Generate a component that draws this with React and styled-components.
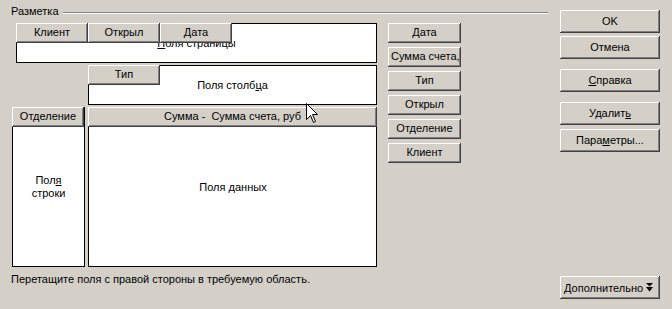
import styled, { createGlobalStyle } from 'styled-components'

const GlobalStyle = createGlobalStyle`
    html, body {
        margin: 0;
        padding: 0;
        background: #d4d0c8;
    }
`

const pageFields = ['Клиент', 'Открыл', 'Дата']
const sourceFields = ['Дата', 'Сумма счета, руб', 'Тип', 'Открыл', 'Отделение', 'Клиент']

const App = () => {
    return (
        <>
            <GlobalStyle />
            <Dialog>
                <Group>
                    <GroupHeading>
                        <GroupTitle>Разметка</GroupTitle>
                        <EtchedLine />
                    </GroupHeading>

                    <GroupBody>
                        <LayoutArea>
                            <Zone $left={4} $width={361} $height={40}>
                                <ZoneLabel><u>П</u>оля страницы</ZoneLabel>
                                <ZoneButtons>
                                    {pageFields.map(name => (
                                        <FieldButton key={name} $width={72}>{name}</FieldButton>
                                    ))}
                                </ZoneButtons>
                            </Zone>

                            <Zone $left={76} $width={289} $height={40}>
                                <ZoneLabel>Поля столб<u>ц</u>а</ZoneLabel>
                                <ZoneButtons>
                                    <FieldButton $width={72}>Тип</FieldButton>
                                </ZoneButtons>
                            </Zone>

                            <BottomRow>
                                <Zone $width={73} $height={160}>
                                    <ZoneLabel>Пол<u>я</u><br />строки</ZoneLabel>
                                    <ZoneButtons>
                                        <FieldButton $width={72}>Отделение</FieldButton>
                                    </ZoneButtons>
                                </Zone>
                                <Zone $width={289} $height={160}>
                                    <ZoneLabel>Поля <u>д</u>анных</ZoneLabel>
                                    <ZoneButtons>
                                        <FieldButton $width={289} $pre>Сумма -  Сумма счета, руб</FieldButton>
                                    </ZoneButtons>
                                </Zone>
                            </BottomRow>
                        </LayoutArea>

                        <FieldList>
                            {sourceFields.map(name => (
                                <FieldButton key={name} $width={73}>{name}</FieldButton>
                            ))}
                        </FieldList>
                    </GroupBody>

                    <Hint>Перетащите поля с правой стороны в требуемую область.</Hint>
                </Group>

                <ButtonColumn>
                    <PushButton>OK</PushButton>
                    <PushButton $gap={3}>Отмена</PushButton>
                    <PushButton $gap={10}><u>С</u>правка</PushButton>
                    <PushButton $gap={10}>Удалит<u>ь</u></PushButton>
                    <PushButton $gap={4}>Пара<u>м</u>етры...</PushButton>
                    <Spacer />
                    <MoreButton>
                        Дополнительно
                        <svg width="7" height="9" viewBox="0 0 7 9">
                            <polygon points="0,0 7,0 3.5,3.5" fill="#000" />
                            <polygon points="0,4 7,4 3.5,8.5" fill="#000" />
                        </svg>
                    </MoreButton>
                </ButtonColumn>

                <Cursor width="13" height="21" viewBox="0 0 13 21">
                    <polygon
                        points="0.5,0.5 0.5,16.5 4.5,12.5 7.5,19.5 9.5,18.5 6.5,11.5 11.5,11.5"
                        fill="#fff"
                        stroke="#000"
                        strokeWidth="1"
                    />
                </Cursor>
            </Dialog>
        </>
    )
}

const Dialog = styled.div`
    position: relative;
    display: flex;
    width: 672px;
    height: 309px;
    box-sizing: border-box;
    padding: 5px 12px 10px 11px;
    background: #d4d0c8;
    color: #000;
    font-family: "Liberation Sans", Arial, sans-serif;
    font-size: 11px;
    line-height: 13px;
    overflow: hidden;
`

const Group = styled.div`
    display: flex;
    flex-direction: column;
    width: 537px;
`

const GroupHeading = styled.div`
    display: flex;
    align-items: center;
    height: 13px;
`

const GroupTitle = styled.span`
    white-space: nowrap;
`

const EtchedLine = styled.div`
    flex: 1;
    margin: 2px 0 0 4px;
    border-top: 1px solid #808080;
    border-bottom: 1px solid #fff;
`

const GroupBody = styled.div`
    display: flex;
    align-items: flex-start;
    margin: 5px 0 0 1px;
`

const LayoutArea = styled.div`
    display: flex;
    flex-direction: column;
    gap: 2px;
    width: 365px;
`

const BottomRow = styled.div`
    display: flex;
    gap: 3px;
`

const Zone = styled.div`
    display: grid;
    box-sizing: border-box;
    width: ${p => p.$width}px;
    height: ${p => p.$height}px;
    margin-left: ${p => p.$left || 0}px;
    background: #fff;
    border: 1px solid #000;
    & > * {
        grid-area: 1 / 1;
    }
`

const ZoneLabel = styled.div`
    align-self: center;
    justify-self: center;
    text-align: center;
    white-space: nowrap;
`

const ZoneButtons = styled.div`
    display: flex;
    align-self: start;
    margin: -1px 0 0 -1px;
`

const FieldButton = styled.div`
    box-sizing: border-box;
    width: ${p => p.$width}px;
    height: 20px;
    padding: 0 3px;
    background: #d4d0c8;
    box-shadow: inset -1px -1px #404040, inset 1px 1px #fff, inset -2px -2px #808080;
    line-height: 19px;
    text-align: center;
    white-space: ${p => (p.$pre ? 'pre' : 'nowrap')};
    overflow: hidden;
`

const FieldList = styled.div`
    display: flex;
    flex-direction: column;
    gap: 4px;
    margin-left: 11px;
`

const Hint = styled.div`
    margin-top: 6px;
    white-space: nowrap;
`

const ButtonColumn = styled.div`
    display: flex;
    flex-direction: column;
    width: 100px;
    margin: 5px 0 0 auto;
`

const PushButton = styled.div`
    box-sizing: border-box;
    height: 23px;
    margin-top: ${p => p.$gap || 0}px;
    background: #d4d0c8;
    box-shadow: inset -1px -1px #404040, inset 1px 1px #fff, inset -2px -2px #808080, inset 2px 2px #d4d0c8;
    line-height: 22px;
    text-align: center;
`

const Spacer = styled.div`
    flex: 1;
`

const MoreButton = styled(PushButton)`
    display: flex;
    align-items: center;
    justify-content: space-between;
    padding: 0 7px 0 4px;
`

const Cursor = styled.svg`
    position: absolute;
    left: 306px;
    top: 103px;
`

export default App
